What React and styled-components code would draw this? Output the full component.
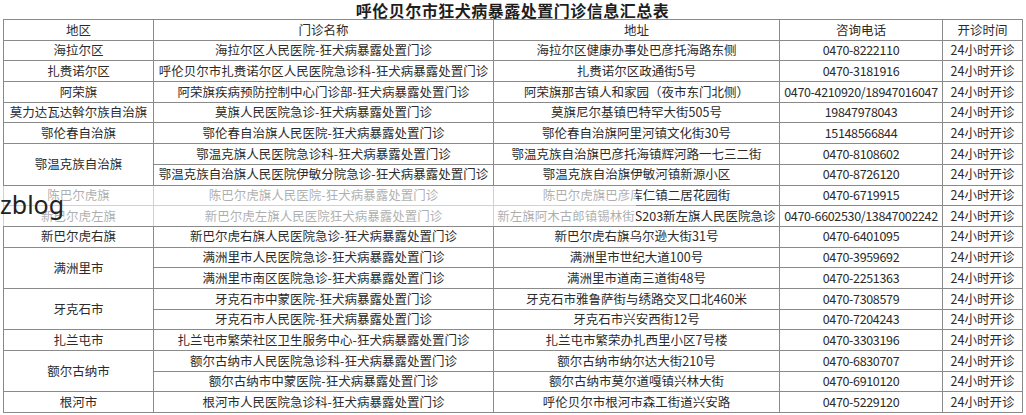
import React from "react";
import styled, { createGlobalStyle } from "styled-components";

const GlobalStyle = createGlobalStyle`
  html, body {
    margin: 0;
    padding: 0;
    background: #ffffff;
  }
  body {
    font-family: "Noto Sans CJK SC", "Noto Sans", sans-serif;
  }
`;

const Page = styled.div`
  position: relative;
  width: 1026px;
  height: 415px;
  overflow: hidden;
  padding: 0 4px 0 3px;
  box-sizing: border-box;
`;

const Title = styled.h1`
  margin: 0;
  height: 19px;
  line-height: 19px;
  padding-top: 1px;
  box-sizing: border-box;
  text-align: center;
  font-family: "Noto Sans CJK SC", sans-serif;
  font-size: 16px;
  font-weight: 700;
  letter-spacing: 0.5px;
  color: #1e1e1e;
`;

const Table = styled.table`
  width: 100%;
  border-collapse: collapse;
  table-layout: fixed;
  font-family: "Noto Sans CJK SC", sans-serif;
  font-size: 12.5px;
  color: #2b2b2b;

  tr {
    height: 20.7px;
  }
`;

const Cell = styled.td`
  border: 1px solid #8a8a8a;
  padding: 0;
  text-align: center;
  vertical-align: middle;
  white-space: nowrap;
  line-height: 1;
  letter-spacing: ${(p) => (p.$phone ? "-0.35px" : "0")};
`;

const HeadCell = styled(Cell).attrs({ as: "th" })`
  font-weight: 400;
`;

const Veil = styled.div`
  position: absolute;
  left: 0;
  top: 186px;
  width: 636px;
  height: 40px;
  background: rgba(255, 255, 255, 0.62);
`;

const Watermark = styled.span`
  position: absolute;
  left: 0;
  top: 189px;
  font-family: "Noto Sans", sans-serif;
  font-size: 25px;
  line-height: 1.2;
  color: #222222;
`;

const groups = [
  { area: "海拉尔区", items: [["海拉尔区人民医院-狂犬病暴露处置门诊", "海拉尔区健康办事处巴彦托海路东侧", "0470-8222110"]] },
  { area: "扎赉诺尔区", items: [["呼伦贝尔市扎赉诺尔区人民医院急诊科-狂犬病暴露处置门诊", "扎赉诺尔区政通街5号", "0470-3181916"]] },
  { area: "阿荣旗", items: [["阿荣旗疾病预防控制中心门诊部-狂犬病暴露处置门诊", "阿荣旗那吉镇人和家园（夜市东门北侧）", "0470-4210920/18947016047"]] },
  { area: "莫力达瓦达斡尔族自治旗", items: [["莫旗人民医院急诊-狂犬病暴露处置门诊", "莫旗尼尔基镇巴特罕大街505号", "19847978043"]] },
  { area: "鄂伦春自治旗", items: [["鄂伦春自治旗人民医院-狂犬病暴露处置门诊", "鄂伦春自治旗阿里河镇文化街30号", "15148566844"]] },
  {
    area: "鄂温克族自治旗",
    items: [
      ["鄂温克旗人民医院急诊科-狂犬病暴露处置门诊", "鄂温克族自治旗巴彦托海镇辉河路一七三二街", "0470-8108602"],
      ["鄂温克族自治旗人民医院伊敏分院急诊-狂犬病暴露处置门诊", "鄂温克族自治旗伊敏河镇新源小区", "0470-8726120"],
    ],
  },
  { area: "陈巴尔虎旗", items: [["陈巴尔虎旗人民医院-狂犬病暴露处置门诊", "陈巴尔虎旗巴彦库仁镇二居花园街", "0470-6719915"]] },
  { area: "新巴尔虎左旗", items: [["新巴尔虎左旗人民医院狂犬病暴露处置门诊", "新左旗阿木古郎镇锡林街S203新左旗人民医院急诊", "0470-6602530/13847002242"]] },
  { area: "新巴尔虎右旗", items: [["新巴尔虎右旗人民医院急诊-狂犬病暴露处置门诊", "新巴尔虎右旗乌尔逊大街31号", "0470-6401095"]] },
  {
    area: "满洲里市",
    items: [
      ["满洲里市人民医院急诊-狂犬病暴露处置门诊", "满洲里市世纪大道100号", "0470-3959692"],
      ["满洲里市南区医院急诊-狂犬病暴露处置门诊", "满洲里市道南三道街48号", "0470-2251363"],
    ],
  },
  {
    area: "牙克石市",
    items: [
      ["牙克石市中蒙医院-狂犬病暴露处置门诊", "牙克石市雅鲁萨街与绣路交叉口北460米", "0470-7308579"],
      ["牙克石市人民医院-狂犬病暴露处置门诊", "牙克石市兴安西街12号", "0470-7204243"],
    ],
  },
  { area: "扎兰屯市", items: [["扎兰屯市繁荣社区卫生服务中心-狂犬病暴露处置门诊", "扎兰屯市繁荣办扎西里小区7号楼", "0470-3303196"]] },
  {
    area: "额尔古纳市",
    items: [
      ["额尔古纳市人民医院急诊科-狂犬病暴露处置门诊", "额尔古纳市纳尔达大街210号", "0470-6830707"],
      ["额尔古纳市中蒙医院-狂犬病暴露处置门诊", "额尔古纳市莫尔道嘎镇兴林大街", "0470-6910120"],
    ],
  },
  { area: "根河市", items: [["根河市人民医院急诊科-狂犬病暴露处置门诊", "呼伦贝尔市根河市森工街道兴安路", "0470-5229120"]] },
];

export default function App() {
  return (
    <Page>
      <GlobalStyle />
      <Title>呼伦贝尔市狂犬病暴露处置门诊信息汇总表</Title>
      <Table>
        <colgroup>
          <col style={{ width: 150 }} />
          <col style={{ width: 340 }} />
          <col style={{ width: 286 }} />
          <col style={{ width: 163 }} />
          <col style={{ width: 80 }} />
        </colgroup>
        <thead>
          <tr>
            <HeadCell>地区</HeadCell>
            <HeadCell>门诊名称</HeadCell>
            <HeadCell>地址</HeadCell>
            <HeadCell>咨询电话</HeadCell>
            <HeadCell>开诊时间</HeadCell>
          </tr>
        </thead>
        <tbody>
          {groups.map((g) =>
            g.items.map(([name, addr, phone], i) => (
              <tr key={g.area + i}>
                {i === 0 && <Cell rowSpan={g.items.length}>{g.area}</Cell>}
                <Cell>{name}</Cell>
                <Cell>{addr}</Cell>
                <Cell $phone>{phone}</Cell>
                <Cell>24小时开诊</Cell>
              </tr>
            ))
          )}
        </tbody>
      </Table>
      <Veil />
      <Watermark>zblog</Watermark>
    </Page>
  );
}
